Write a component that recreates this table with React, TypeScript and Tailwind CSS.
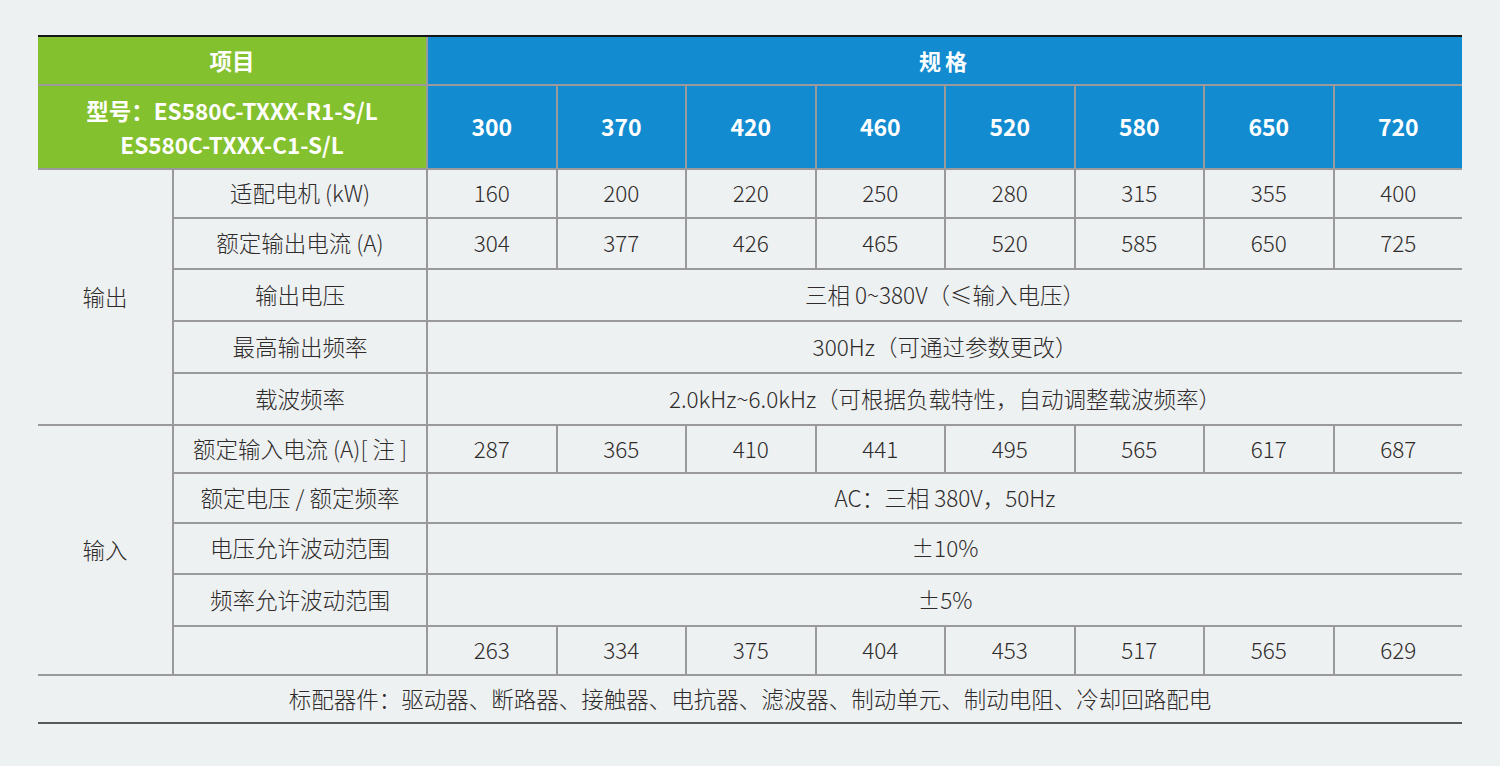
import React from "react";

const cellBase = "flex items-center justify-center bg-[#eef1f2] text-[22.5px] font-light text-[#2f2b2b] text-center leading-none pb-[2px]";
const blueCell = "flex items-center justify-center bg-[#128bd0] text-white font-bold text-[22px] leading-none pb-[1px]";
const greenCell = "flex items-center justify-center bg-[#84c12e] text-white font-bold text-[22.5px] text-center";

const models = ["300", "370", "420", "460", "520", "580", "650", "720"];

function ValueRow({ label, values }: { label: string; values: string[] }) {
  return (
    <>
      <div className={`${cellBase} col-start-2`}>{label}</div>
      {values.map((v, i) => (
        <div key={i} className={cellBase}>
          {v}
        </div>
      ))}
    </>
  );
}

function SpanRow({ label, value }: { label: string; value: string }) {
  return (
    <>
      <div className={`${cellBase} col-start-2`}>{label}</div>
      <div className={`${cellBase} col-span-8`}>{value}</div>
    </>
  );
}

export default function App() {
  return (
    <div className="w-[1500px] h-[766px] bg-[#eef1f2] pt-[35px] px-[38px] font-['Noto_Sans_CJK_SC','Noto_Sans',sans-serif]">
      <div className="border-t-2 border-b-2 border-t-[#151515] border-b-[#5a5a5a]">
        <div className="grid grid-cols-[134px_252px_repeat(8,minmax(0,1fr))] grid-rows-[47px_82px_47px_49px_50px_50px_50px_46px_48px_49px_50px_47px_46px] gap-[2px] bg-[#9a9a9a]">
          {/* header row 1 */}
          <div className={`${greenCell} col-span-2`}>项目</div>
          <div className={`${blueCell} col-span-8 tracking-[4px]`}>规格</div>
          {/* header row 2 */}
          <div className={`${greenCell} col-span-2 flex-col leading-[34px]`}>
            <div>型号：ES580C-TXXX-R1-S/L</div>
            <div>ES580C-TXXX-C1-S/L</div>
          </div>
          {models.map((m) => (
            <div key={m} className={`${blueCell} text-[23px]`}>
              {m}
            </div>
          ))}

          {/* output group */}
          <div className={`${cellBase} row-span-5 col-start-1`}>输出</div>
          <ValueRow label="适配电机 (kW)" values={["160", "200", "220", "250", "280", "315", "355", "400"]} />
          <ValueRow label="额定输出电流 (A)" values={["304", "377", "426", "465", "520", "585", "650", "725"]} />
          <SpanRow label="输出电压" value="三相 0~380V（≤输入电压）" />
          <SpanRow label="最高输出频率" value="300Hz（可通过参数更改）" />
          <SpanRow label="载波频率" value="2.0kHz~6.0kHz（可根据负载特性，自动调整载波频率）" />

          {/* input group */}
          <div className={`${cellBase} row-span-5 col-start-1`}>输入</div>
          <ValueRow label="额定输入电流 (A)[ 注 ]" values={["287", "365", "410", "441", "495", "565", "617", "687"]} />
          <SpanRow label="额定电压 / 额定频率" value="AC：三相 380V，50Hz" />
          <SpanRow label="电压允许波动范围" value="±10%" />
          <SpanRow label="频率允许波动范围" value="±5%" />
          <ValueRow label="" values={["263", "334", "375", "404", "453", "517", "565", "629"]} />

          {/* footer */}
          <div className={`${cellBase} col-span-10`}>
            标配器件：驱动器、断路器、接触器、电抗器、滤波器、制动单元、制动电阻、冷却回路配电
          </div>
        </div>
      </div>
    </div>
  );
}
